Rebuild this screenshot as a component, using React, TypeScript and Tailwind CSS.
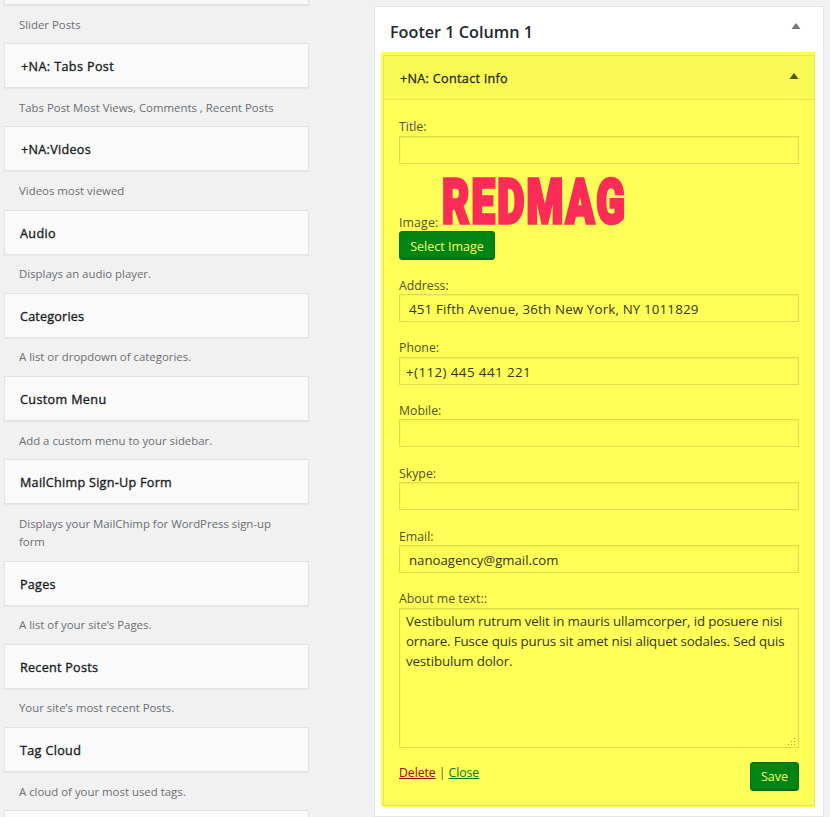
import React from 'react';

type Widget = { name: string; desc: string; nameTrack?: string; tall?: boolean; shift?: string };

const widgets: Widget[] = [
  { name: '+NA: Tabs Post', desc: 'Tabs Post Most Views, Comments , Recent Posts', nameTrack: 'ml-[1px] tracking-[0.38px]' },
  { name: '+NA:Videos', desc: 'Videos most viewed', nameTrack: 'ml-[1px] tracking-[0.3px]' },
  { name: 'Audio', desc: 'Displays an audio player.', nameTrack: 'tracking-[0.35px]', shift: '-mt-px' },
  { name: 'Categories', desc: 'A list or dropdown of categories.', nameTrack: 'tracking-[0.2px]', shift: '-mt-px' },
  { name: 'Custom Menu', desc: 'Add a custom menu to your sidebar.', nameTrack: 'tracking-[0.36px]' },
  { name: 'MailChimp Sign-Up Form', desc: 'Displays your MailChimp for WordPress sign-up form', nameTrack: 'tracking-[0.28px]', tall: true },
  { name: 'Pages', desc: 'A list of your site’s Pages.', nameTrack: 'tracking-[0.25px]', shift: '-mt-px' },
  { name: 'Recent Posts', desc: 'Your site’s most recent Posts.', nameTrack: 'tracking-[0.26px]', shift: '-mt-px' },
  { name: 'Tag Cloud', desc: 'A cloud of your most used tags.', nameTrack: 'tracking-[0.34px]' },
];

const cardClass = 'h-[45px] w-[305px] shrink-0 border border-[#e3e3e3] bg-[#fafafa] shadow-[0_1px_1px_rgba(0,0,0,0.04)]';

function WidgetCard({ name, desc, nameTrack = '', tall, shift = '' }: Widget) {
  return (
    <div className={tall ? 'h-[102px] shrink-0' : 'h-[83.13px] shrink-0'}>
      <div className={`${cardClass} flex items-center pl-[15px] pt-[3px]`}>
        <h4 className={`text-[12.6px] leading-[18px] text-[#191e23] [-webkit-text-stroke:0.35px_#191e23] ${nameTrack}`}>{name}</h4>
      </div>
      <div className={shift}>
        <p className="ml-[15px] w-[270px] pt-[11px] text-[11.4px] leading-[18px] text-[#6b6e72]">{desc}</p>
      </div>
    </div>
  );
}

function Arrow({ color }: { color: string }) {
  return (
    <svg width="10" height="6" viewBox="0 0 10 6" className="shrink-0">
      <path d="M5 0L9.5 6H0.5Z" fill={color} />
    </svg>
  );
}

type FieldProps = { label: string; value?: string; gap: string; text?: string; labelPad?: string };

function Field({ label, value, gap, text = '', labelPad = 'pt-[1px]' }: FieldProps) {
  return (
    <div className={gap}>
      <label className={`block h-[18px] text-[12.3px] leading-[18px] text-[#53532c] ${labelPad}`}>{label}</label>
      <div
        className={`flex h-[28px] items-center border border-[#dddd4c] pt-[3px] text-[#32371b] shadow-[inset_0_1px_2px_rgba(0,0,0,0.07)] ${text}`}
      >
        {value}
      </div>
    </div>
  );
}

function Logo() {
  return (
    <svg width="186" height="50" viewBox="0 0 186 50" className="mt-[12px] ml-[2px] shrink-0 overflow-visible">
      <text
        x="2"
        y="46.5"
        textLength="185"
        lengthAdjust="spacingAndGlyphs"
        fontSize="61"
        fontWeight="900"
        letterSpacing="3.2"
        fill="#fb2c57"
        stroke="#fb2c57"
        strokeWidth="3.4"
        strokeLinejoin="miter"
        strokeMiterlimit="3"
        className="font-['Roboto',sans-serif]"
      >
        REDMAG
      </text>
    </svg>
  );
}

const buttonClass =
  'flex items-center justify-center rounded-[3px] border border-[#007112] bg-[#008515] text-[12.5px] text-[#ffff57] shadow-[inset_0_-1px_0_#006b10]';

export default function App() {
  return (
    <div className="flex h-[817px] w-[830px] overflow-hidden bg-[#f1f1f1] font-['Open_Sans','Noto_Sans',sans-serif]">
      <div className="flex w-[374px] flex-col pl-[4px]">
        <div className="-mt-[40px] h-[83.35px] shrink-0">
          <div className={cardClass} />
          <p className="ml-[15px] mt-[11px] text-[11.4px] leading-[18px] text-[#6b6e72]">Slider Posts</p>
        </div>
        {widgets.map((w) => (
          <WidgetCard key={w.name} {...w} />
        ))}
        <div className={cardClass} />
      </div>

      <div className="mt-[6px] h-[811px] w-[450px] border border-[#e5e5e5] bg-white pl-[6px]">
        <div className="flex h-[45px] items-start justify-between pl-[9px] pr-[22px]">
          <h3 className="mt-[13px] text-[16.2px] font-semibold leading-[24px] text-[#23282d]">Footer 1 Column 1</h3>
          <div className="mt-[16px]">
            <Arrow color="#72777c" />
          </div>
        </div>
        <div className="h-[755px] w-[434px] bg-[#ffff57] pl-[2px] pt-[3px]">
          <div className="h-[751px] border border-[#e5e54e]">
            <div className="flex h-[44px] justify-between border-b border-[#e5e54e] bg-[#fafa55] pl-[16px] pr-[15px]">
              <h4 className="mt-[14px] text-[12.6px] leading-[18px] tracking-[0.32px] text-[#23282d] [-webkit-text-stroke:0.3px_#23282d]">
                +NA: Contact info
              </h4>
              <div className="mt-[17px]">
                <Arrow color="#50551f" />
              </div>
            </div>
            <div className="pl-[15px] pr-[15px]">
              <Field label="Title:" gap="mt-[18px]" labelPad="pt-0" />
              <div className="flex h-[67px] items-start">
                <span className="mt-[50px] text-[12.3px] leading-[18px] tracking-[0.15px] text-[#53532c]">Image:</span>
                <Logo />
              </div>
              <div className={`${buttonClass} h-[29px] w-[96px] pt-[3px]`}>Select Image</div>
              <Field
                label="Address:"
                value="451 Fifth Avenue, 36th New York, NY 1011829"
                gap="mt-[16px]"
                text="pl-[9px] text-[13.3px] tracking-[0.17px]"
              />
              <Field
                label="Phone:"
                value="+(112) 445 441 221"
                gap="mt-[17px]"
                text="pl-[6px] text-[13.4px] tracking-[0.4px]"
                labelPad="pt-0"
              />
              <Field label="Mobile:" gap="mt-[16px]" />
              <Field label="Skype:" gap="mt-[17px]" />
              <Field label="Email:" value="nanoagency@gmail.com" gap="mt-[17px]" text="pl-[9px] text-[13.2px]" />
              <div className="mt-[17px]">
                <label className="block h-[18px] text-[12.3px] leading-[18px] text-[#53532c]">About me text::</label>
                <div className="relative h-[140px] border border-[#dddd4c] pl-[6px] pt-[2px] text-[13.3px] leading-[20px] tracking-[-0.13px] text-[#32371b] shadow-[inset_0_1px_2px_rgba(0,0,0,0.07)]">
                  <div>Vestibulum rutrum velit in mauris ullamcorper, id posuere nisi</div>
                  <div>ornare. Fusce quis purus sit amet nisi aliquet sodales. Sed quis</div>
                  <div>vestibulum dolor.</div>
                  <svg width="9" height="9" viewBox="0 0 9 9" className="absolute bottom-[1px] right-[2px]" fill="#a3a340">
                    <path d="M7 1h1v1H7zM4 4h1v1H4zM7 4h1v1H7zM1 7h1v1H1zM4 7h1v1H4zM7 7h1v1H7z" />
                  </svg>
                </div>
              </div>
              <div className="mt-[14px] flex items-start justify-between">
                <div className="mt-[1px] whitespace-pre text-[12.3px] leading-[20px] tracking-[-0.08px] text-[#53532c]">
                  <a className="text-[#aa0000] underline">Delete</a> | <a className="text-[#007b13] underline">Close</a>
                </div>
                <div className={`${buttonClass} h-[29px] w-[49px] pt-[1px]`}>Save</div>
              </div>
            </div>
          </div>
        </div>
      </div>
    </div>
  );
}
